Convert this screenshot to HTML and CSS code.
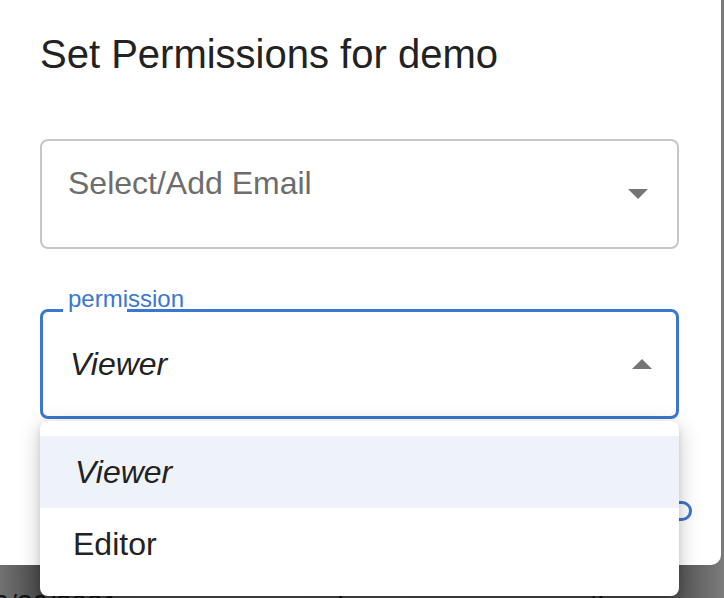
FILE: index.html
```html
<!DOCTYPE html>
<html>
<head>
<meta charset="utf-8">
<link rel="stylesheet" href="styles.css">
</head>
<body>
<div class="screen">
  <div class="dialog">
    <h1 class="title">Set Permissions for demo</h1>
    <div class="field field-email">
      <span class="placeholder">Select/Add Email</span>
      <svg class="arrow" width="20" height="10" viewBox="0 0 20 10"><path d="M0 0H20L10 10Z" fill="#757575"/></svg>
    </div>
    <div class="field field-perm">
      <span class="notch"></span>
      <span class="label">permission</span>
      <span class="value">Viewer</span>
      <svg class="arrow" width="20" height="10" viewBox="0 0 20 10"><path d="M0 10H20L10 0Z" fill="#757575"/></svg>
    </div>
    <div class="actions">
      <span class="btn"></span>
    </div>
  </div>
  <div class="under">
    <span class="date">10/20/2021</span>
    <span class="owner">demo</span>
    <span class="role">tl</span>
  </div>
  <ul class="menu">
    <li class="option selected">Viewer</li>
    <li class="option">Editor</li>
  </ul>
</div>
</body>
</html>
```

FILE: styles.css
```css
* { box-sizing: border-box; }
html, body { margin: 0; padding: 0; }
body {
  font-family: "Liberation Sans", Arial, sans-serif;
  color: #212121;
  background: #474747;
}
.screen {
  position: relative;
  width: 724px;
  height: 598px;
  overflow: hidden;
  background: linear-gradient(to right, #727272 0, #4b4b4b 40px, #454545 660px, #7c7c7c 724px);
}
.dialog {
  width: 721px;
  height: 565px;
  background: #fff;
  border-bottom-right-radius: 10px;
  padding: 31px 42px 0 40px;
}
.title {
  margin: 0;
  font-size: 40px;
  font-weight: 400;
  line-height: 46px;
  color: #222;
}
.field {
  position: relative;
  display: flex;
  height: 110px;
  border-radius: 8px;
}
.field-email {
  margin-top: 62px;
  border: 2px solid #c6c6c6;
  align-items: flex-start;
  padding: 24px 29px 0 26px;
}
.placeholder {
  flex: 1;
  font-size: 32px;
  line-height: 37px;
  color: #6d6d6d;
}
.field-email .arrow { align-self: center; margin-top: -24px; }
.field-perm {
  margin-top: 60px;
  border: 3px solid #3a77cf;
  align-items: center;
  padding: 0 24px 0 27px;
}
.notch {
  position: absolute;
  left: 20px;
  top: -3px;
  width: 64px;
  height: 3px;
  background: #fff;
}
.label {
  position: absolute;
  left: 25px;
  top: -25px;
  font-size: 24px;
  line-height: 24px;
  color: #3a77cf;
}
.value {
  flex: 1;
  font-size: 32px;
  font-style: italic;
  line-height: 37px;
  color: #222;
}
.actions {
  display: flex;
  justify-content: flex-end;
  margin: 82px -13px 0 0;
}
.btn {
  width: 140px;
  height: 20px;
  border: 3px solid #3a77cf;
  border-radius: 10px;
}
.under {
  display: flex;
  height: 33px;
  padding-top: 24px;
  font-size: 28px;
  line-height: 32px;
  color: #111;
  white-space: nowrap;
}
.date { margin-left: -22px; width: 350px; }
.owner { width: 262px; }
.menu {
  position: absolute;
  left: 40px;
  top: 421px;
  width: 639px;
  margin: 0;
  padding: 15px 0 16px;
  list-style: none;
  background: #fff;
  border-radius: 8px;
  box-shadow: 0 6px 22px rgba(0,0,0,0.22), 0 2px 6px rgba(0,0,0,0.10);
}
.option {
  height: 72px;
  display: flex;
  align-items: center;
  padding-left: 33px;
  font-size: 32px;
  color: #222;
}
.option.selected {
  background: #eef2f9;
  font-style: italic;
  padding-left: 35px;
}
```
